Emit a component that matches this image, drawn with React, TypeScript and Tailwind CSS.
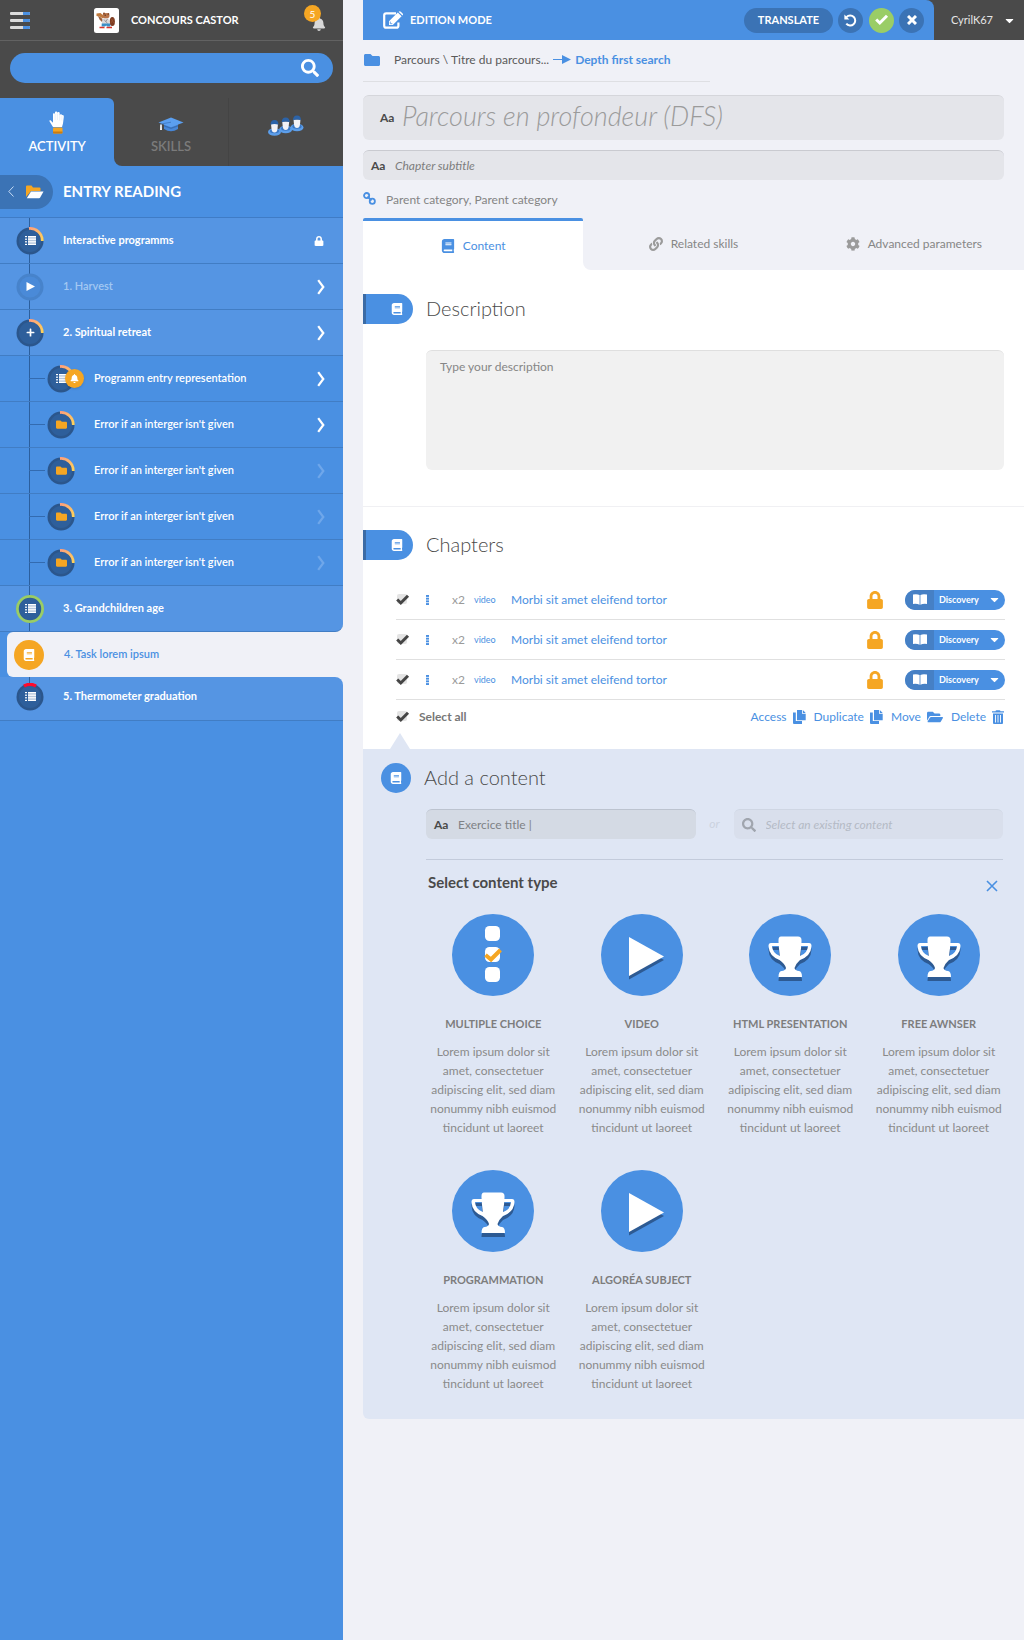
import React from "react";
import {
  FaBell,
  FaBook,
  FaCaretDown,
  FaCog,
  FaFolder,
  FaFolderOpen,
  FaLink,
  FaLock,
  FaPlus,
  FaSearch,
} from "react-icons/fa";

type Glyph = "list" | "play" | "plus" | "folder" | "book";
type Ring = "progress" | "faded" | "done" | "alert";

interface NavRow {
  label: string;
  glyph: Glyph;
  ring: Ring;
  sub?: boolean;
  muted?: boolean;
  end?: "lock" | "chevron" | "dim";
  badge?: boolean;
}

const navRows: NavRow[] = [
  { label: "Interactive programms", glyph: "list", ring: "progress", end: "lock" },
  { label: "1. Harvest", glyph: "play", ring: "faded", muted: true, end: "chevron" },
  { label: "2. Spiritual retreat", glyph: "plus", ring: "progress", end: "chevron" },
  { label: "Programm entry representation", glyph: "list", ring: "progress", sub: true, end: "chevron", badge: true },
  { label: "Error if an interger isn't given", glyph: "folder", ring: "progress", sub: true, end: "chevron" },
  { label: "Error if an interger isn't given", glyph: "folder", ring: "progress", sub: true, end: "dim" },
  { label: "Error if an interger isn't given", glyph: "folder", ring: "progress", sub: true, end: "dim" },
  { label: "Error if an interger isn't given", glyph: "folder", ring: "progress", sub: true, end: "dim" },
];

function ListGlyph() {
  return (
    <svg width="11" height="9" viewBox="0 0 11 9" aria-hidden="true">
      <rect x="3" y="0" width="8" height="9" fill="#ffffff" opacity="0.65" />
      {[0, 2.6, 5.2, 7.8].map((y) => (
        <g key={y} fill="#ffffff">
          <rect x="0" y={y} width="2" height="1.2" />
          <rect x="3" y={y} width="8" height="1.2" />
        </g>
      ))}
    </svg>
  );
}

function NavGlyph({ glyph }: { glyph: Glyph }) {
  if (glyph === "list") return <ListGlyph />;
  if (glyph === "play")
    return (
      <svg width="9" height="9" viewBox="0 0 9 9" aria-hidden="true" className="ml-px">
        <path d="M0.5 0L9 4.5L0.5 9Z" fill="#ffffff" />
      </svg>
    );
  if (glyph === "plus") return <FaPlus size={9} />;
  if (glyph === "folder") return <FaFolder size={11} className="text-[#f5a623]" />;
  return <FaBook size={12} />;
}

function NavBadge({ glyph, ring, badge }: { glyph: Glyph; ring: Ring; badge?: boolean }) {
  return (
    <span className="relative z-10 flex size-7 shrink-0 items-center justify-center">
      <svg viewBox="0 0 28 28" className="absolute inset-0 size-7" aria-hidden="true">
        <defs>
          <linearGradient id="arc" x1="0" y1="0" x2="1" y2="1">
            <stop offset="0" stopColor="#ffa07c" />
            <stop offset="1" stopColor="#fdd35a" />
          </linearGradient>
        </defs>
        {ring === "faded" ? (
          <g>
            <circle cx="14" cy="14" r="13.5" fill="#4783cb" />
            <circle cx="14" cy="14" r="10.5" fill="#4a8ad8" />
          </g>
        ) : (
          <g>
            <circle cx="14" cy="14" r="13.5" fill="#2b568c" />
            <circle cx="14" cy="14" r="11" fill="#2e5f9b" />
          </g>
        )}
        {ring === "progress" && (
          <path d="M13 1.5A12.3 12.3 0 0 1 26.3 14" fill="none" stroke="url(#arc)" strokeWidth="2.8" />
        )}
        {ring === "done" && <circle cx="14" cy="14" r="12.6" fill="none" stroke="#9acd66" strokeWidth="2.8" />}
        {ring === "alert" && <path d="M8 3Q14 -0.4 20 3" fill="none" stroke="#ff0a2b" strokeWidth="3.2" />}
      </svg>
      <span className="relative flex text-white">
        <NavGlyph glyph={glyph} />
      </span>
      {badge && (
        <span className="absolute top-1 left-4.5 flex size-[19px] items-center justify-center rounded-full bg-[#f5a623] text-white shadow-sm">
          <FaBell size={9} />
        </span>
      )}
    </span>
  );
}

function Chevron({ dim }: { dim?: boolean }) {
  return (
    <svg width="8" height="16" viewBox="0 0 8 16" aria-hidden="true" className={dim ? "text-[#6fa7ea]" : "text-white"}>
      <path d="M1.2 1.2L6.3 8L1.2 14.8" fill="none" stroke="currentColor" strokeWidth="2.2" />
    </svg>
  );
}

function Row({ row }: { row: NavRow }) {
  return (
    <li className={row.sub ? "bg-[#4a90e2]" : "bg-[#5595e3]"}>
      <a href="#" className="relative flex h-[46px] items-center border-b border-[#417dc4] pr-[18px]">
        <span className="absolute inset-y-0 left-[29px] w-px bg-[#2b5f9e]" />
        {row.sub && <span className="absolute left-[29px] h-px w-4 bg-[#336bb0]" />}
        <span className={row.sub ? "ml-[47px] flex w-[47px]" : "ml-4 flex w-[47px]"}>
          <NavBadge glyph={row.glyph} ring={row.ring} badge={row.badge} />
        </span>
        <span
          className={
            row.sub
              ? "flex-1 text-[11px] font-semibold text-white"
              : row.muted
                ? "flex-1 text-[11px] font-semibold text-[#a3c8f2]"
                : "flex-1 text-[11px] font-bold text-white"
          }
        >
          {row.label}
        </span>
        {row.end === "lock" && <FaLock size={10} className="mr-px text-white" />}
        {row.end === "chevron" && <Chevron />}
        {row.end === "dim" && <Chevron dim />}
      </a>
    </li>
  );
}

function Beaver() {
  return (
    <svg width="25" height="25" viewBox="0 0 25 25" role="img" aria-label="Castor">
      <rect width="25" height="25" rx="2.5" fill="#ffffff" />
      <ellipse cx="18.3" cy="13.5" rx="2.6" ry="4.6" fill="#7d3c22" />
      <path d="M17 11l3 4M19.6 10.5l-3 5" stroke="#a45a35" strokeWidth="0.6" />
      <path d="M2.500 5.500l4-.5 4 3.500-1.500 2-3-1.800-3.500-.7z" fill="#c07a3c" />
      <path d="M4 8l3 1.500 2.500 3-1.500 1.500-2.500-2.500z" fill="#9a5e3c" />
      <ellipse cx="12" cy="7.8" rx="3.5" ry="2.8" fill="#b9744a" />
      <circle cx="10" cy="5.600" r="1" fill="#8a4a28" />
      <circle cx="14.300" cy="5.900" r="1" fill="#8a4a28" />
      <circle cx="11.200" cy="7.200" r="0.600" fill="#3a2418" />
      <path d="M8.500 10.500h6l1.500 6H7.700z" fill="#dcd9da" />
      <path d="M10 11.500l3.500 4M13.500 11l-2 3" stroke="#8d8a90" strokeWidth="0.800" />
      <path d="M7.800 15.500h8.300l.3 3h-3.200l-1-1-1.200 1H7.600z" fill="#3a8fc7" />
      <path d="M5.500 18.800h5v1.500h-5zM12.500 18.800h5.500v1.500h-5.500z" fill="#d8342b" />
    </svg>
  );
}

function Hand() {
  return (
    <svg width="16" height="23" viewBox="0 0 16 23" aria-hidden="true">
      <path
        d="M4 16L.6 10.600C0 9.600 1.200 8.900 2 9.700L4 11.800V3.200C4 1.900 5.900 1.900 6 3.200V1.400C6.100 .1 8.100 .1 8.300 1.400V2C8.500 .7 10.700 .8 10.700 2.200V4C11 2.900 13 3 13 4.300C14.300 3.500 15 4.700 14.800 6L14 12.500L13 16Z"
        fill="#ffffff"
      />
      <path d="M6.100 3v6M8.400 2.500v6.500M10.700 3.500v6M12.900 4.500v5" stroke="#c9dcf3" strokeWidth="0.400" />
      <rect x="4" y="16.500" width="9.500" height="6" rx="1" fill="#f5a623" />
      <path d="M4 20.500h9.500v1a1 1 0 0 1-1 1H5a1 1 0 0 1-1-1z" fill="#c97b12" />
    </svg>
  );
}

function GradCap() {
  return (
    <svg width="26" height="15" viewBox="0 0 26 15" aria-hidden="true">
      <path d="M6 7V12Q13 16.500 20 12V7Z" fill="#4787d8" />
      <path d="M6 8L13 10.500L20 8V9.500L13 12L6 9.500Z" fill="#3a6fb5" />
      <path d="M13 .5L25.500 5.500L13 10.200L.5 5.500Z" fill="#5b9ff0" />
      <path d="M13 5.200L3 7V10" fill="none" stroke="#3a6fb5" strokeWidth="0.700" />
      <path d="M2.200 7.500H3.800L4 13H2Z" fill="#f0f0f0" />
    </svg>
  );
}

function Person({ x, y }: { x: number; y: number }) {
  return (
    <g transform={`translate(${x} ${y})`}>
      <ellipse cx="6.500" cy="12.500" rx="6.500" ry="3.800" fill="#5c9eea" />
      <ellipse cx="6.500" cy="11.500" rx="4.600" ry="2.200" fill="#3b78c4" />
      <path d="M3 4.500h7l-.6 5.500Q9 13 6.500 13Q4 13 3.600 10z" fill="#f3f2f6" />
      <path d="M2.500 5.200Q2.500 0.500 6.500 0.500Q10.500 .5 10.500 5.200Q6.500 3.800 2.500 5.200Z" fill="#2c63a8" />
    </g>
  );
}

function People() {
  return (
    <svg width="36" height="21" viewBox="0 0 36 21" role="img" aria-label="Groups">
      <Person x={22.5} y={0} />
      <Person x={11.2} y={2} />
      <Person x={0} y={4.500} />
    </svg>
  );
}

function Sidebar() {
  return (
    <aside className="flex w-[343px] shrink-0 flex-col bg-[#4a90e2]">
      <div className="bg-[#4a4a4a]">
        <header className="flex h-[41px] items-center border-b border-[#626262] px-2.5">
          <button aria-label="Menu" className="flex w-[84px]">
            <svg width="20" height="17" viewBox="0 0 20 17">
              {[0, 7, 14].map((y) => (
                <g key={y}>
                  <rect y={y} width="20" height="3" rx="1" fill="#dcdcdc" />
                  <path d={`M13 ${y}h6a1 1 0 0 1 1 1v1a1 1 0 0 1-1 1h-6z`} fill="#4a90e2" />
                </g>
              ))}
            </svg>
          </button>
          <Beaver />
          <h1 className="ml-3 flex-1 text-[11px] font-bold text-white">CONCOURS CASTOR</h1>
          <button aria-label="5 notifications" className="relative mt-2 mr-[7px] text-[#d8d8d8]">
            <FaBell size={14} />
            <span className="absolute -top-3 -left-2 flex size-[17px] items-center justify-center rounded-full bg-[#f5a623] text-[10px] leading-none text-white">
              5
            </span>
          </button>
        </header>
        <form className="px-2.5 pt-3 pb-[15px]">
          <div className="flex h-[30px] items-center rounded-full bg-[#4a90e2] pr-3.5 pl-4">
            <input aria-label="Search" className="min-w-0 flex-1 bg-transparent text-xs text-white outline-none" />
            <button type="button" aria-label="Search" className="text-white">
              <FaSearch size={18} />
            </button>
          </div>
        </form>
        <nav className="grid grid-cols-3">
          <button className="flex h-[68px] flex-col items-center justify-end rounded-tr-md bg-[#4a90e2] pb-2.5 text-[13px] leading-5 font-semibold text-white">
            <Hand />
            <span className="mt-0.5">ACTIVITY</span>
          </button>
          <div className="col-span-2 bg-[#4a90e2]">
            <div className="grid h-[68px] grid-cols-2 rounded-bl-lg bg-[#4a4a4a]">
              <button className="flex flex-col items-center justify-end border-r border-[#444444] pb-2.5 text-[13px] leading-5 font-semibold text-[#7b7b7b]">
                <GradCap />
                <span className="mt-1">SKILLS</span>
              </button>
              <button aria-label="Groups" className="flex items-start justify-center pt-[17px]">
                <People />
              </button>
            </div>
          </div>
        </nav>
      </div>
      <div className="flex h-[52px] items-center border-b border-[#3f7cc6]">
        <button
          aria-label="Back"
          className="flex h-[34px] w-[53px] items-center gap-3 rounded-r-full bg-[#3b73b5] pl-2 text-white"
        >
          <svg width="6" height="11" viewBox="0 0 6 11">
            <path d="M5.500 .5L.8 5.500L5.500 10.500" fill="none" stroke="#c5dbf5" />
          </svg>
          <svg width="18" height="14" viewBox="0 0 18 14">
            <path d="M0 12V1.500Q0 .5 1 .5H5.500L7 2.500H13.500Q14.500 2.500 14.500 3.500V6H5Z" fill="#f5a623" />
            <path d="M5 6.500H17.500L14.200 12.500Q13.800 13.200 13 13.200H.8Z" fill="#ffffff" />
          </svg>
        </button>
        <h2 className="ml-2.5 text-[15px] font-bold text-white">ENTRY READING</h2>
      </div>
      <ul className="bg-[#f0f1f7]">
        {navRows.map((row, i) => (
          <Row key={i} row={row} />
        ))}
        <li>
          <a
            href="#"
            className="relative flex h-[46px] items-center rounded-br-lg border-b border-[#417dc4] bg-[#5595e3] pl-4"
          >
            <span className="absolute inset-y-0 left-[29px] w-px bg-[#2b5f9e]" />
            <NavBadge glyph="list" ring="done" />
            <span className="ml-[19px] text-[11px] font-bold text-white">3. Grandchildren age</span>
          </a>
        </li>
        <li className="bg-linear-to-r from-[#4a90e2] from-50% to-[#f0f1f7] to-50% pl-[7px]">
          <a href="#" aria-current="page" className="flex h-[45px] items-center rounded-l-md bg-[#f0f1f7] pl-[7px]">
            <span className="flex size-[30px] items-center justify-center rounded-full bg-[#f5a623] text-white">
              <FaBook size={12} />
            </span>
            <span className="ml-5 text-[11px] font-semibold text-[#4a90e2]">4. Task lorem ipsum</span>
          </a>
        </li>
        <li>
          <a
            href="#"
            className="relative flex h-11 items-center rounded-tr-lg border-b border-[#417dc4] bg-[#5595e3] pb-1 pl-4"
          >
            <span className="absolute top-0 left-[29px] h-2 w-px bg-[#2b5f9e]" />
            <NavBadge glyph="list" ring="alert" />
            <span className="ml-[19px] text-[11px] font-bold text-white">5. Thermometer graduation</span>
          </a>
        </li>
      </ul>
    </aside>
  );
}

function CheckMark({ size }: { size: number }) {
  return (
    <svg width={size} height={size} viewBox="0 0 14 14" aria-hidden="true" className="pointer-events-none absolute inset-0">
      <path d="M1.200 6.500L4.800 10L12 2.700" fill="none" stroke="currentColor" strokeWidth="3" />
    </svg>
  );
}

function TickBox({ id, label }: { id: string; label?: string }) {
  return (
    <span className="relative flex size-3.5 shrink-0 text-[#454545]">
      <input
        id={id}
        type="checkbox"
        defaultChecked
        aria-label={label}
        className="m-px size-2.5 appearance-none rounded-xs bg-[#e4e4e4]"
      />
      <CheckMark size={14} />
    </span>
  );
}

function EditIcon() {
  return (
    <svg width="21" height="18" viewBox="0 0 21 18" aria-hidden="true">
      <path
        d="M13 2.300H3.200Q1.200 2.300 1.200 4.300V14.700Q1.200 16.700 3.200 16.700H13.400Q15.400 16.700 15.400 14.700V11.500"
        fill="none"
        stroke="#ffffff"
        strokeWidth="2.200"
      />
      <path d="M6 10.200L14.800 1.400L18.600 5.200L9.800 14H6Z" fill="#ffffff" />
      <path d="M15.600 .8Q16.600 -.3 17.800 .7L19.600 2.500Q20.500 3.500 19.500 4.500Z" fill="#ffffff" />
      <path d="M7.300 10.600V12.700H9.300" fill="none" stroke="#4a90e2" strokeWidth="0.800" />
      <path d="M15.200 1.200L19 5" stroke="#4a90e2" strokeWidth="0.700" />
    </svg>
  );
}

function TopBar() {
  return (
    <header className="flex h-10 bg-[#4a4a4a]">
      <div className="flex flex-1 items-center rounded-tr-lg bg-[#4a90e2] pr-2.5 pl-5 text-white">
        <EditIcon />
        <h2 className="ml-1.5 flex-1 text-[11px] font-bold">EDITION MODE</h2>
        <button className="h-[25px] w-[89px] rounded-full bg-[#3b73b5] text-[11px] font-bold">TRANSLATE</button>
        <button aria-label="Undo" className="ml-[5px] flex size-[25px] items-center justify-center rounded-full bg-[#3b73b5]">
          <svg width="13" height="13" viewBox="0 0 13 13">
            <path d="M2.500 3.200A5 5 0 1 1 2.300 9.600" fill="none" stroke="#ffffff" strokeWidth="2" />
            <path d="M.4 .6V5.500H5.300Z" fill="#ffffff" />
          </svg>
        </button>
        <button aria-label="Validate" className="ml-1.5 flex size-[25px] items-center justify-center rounded-full bg-[#9acd66]">
          <span className="relative size-3.5">
            <CheckMark size={14} />
          </span>
        </button>
        <button aria-label="Close" className="ml-[5px] flex size-[25px] items-center justify-center rounded-full bg-[#3b73b5]">
          <svg width="10" height="10" viewBox="0 0 10 10">
            <path d="M1 1L9 9M9 1L1 9" stroke="#ffffff" strokeWidth="3" />
          </svg>
        </button>
      </div>
      <button className="flex w-[90px] items-center justify-end gap-2.5 pr-2 text-[11px] text-[#e6e6e6]">
        CyrilK67
        <FaCaretDown size={13} className="text-white" />
      </button>
    </header>
  );
}

function SectionTitle({ title }: { title: string }) {
  return (
    <div className="flex h-[30px] items-center">
      <span className="flex h-[30px] w-[50px] items-center justify-end rounded-r-full border-l-3 border-[#3b6ba5] bg-[#4a90e2] pr-2.5 text-white">
        <FaBook size={12} />
      </span>
      <h3 className="mb-0.5 ml-[13px] text-xl font-light text-[#4a4a4a]">{title}</h3>
    </div>
  );
}

function BookOpen() {
  return (
    <svg width="14" height="11" viewBox="0 0 14 11" aria-hidden="true">
      <path d="M0 .5Q4 -.4 6.600 1V10.800Q4 9.500 0 10Z" fill="#ffffff" />
      <path d="M14 .5Q10 -.4 7.400 1V10.800Q10 9.500 14 10Z" fill="#ffffff" />
    </svg>
  );
}

function ChapterRow({ index }: { index: number }) {
  return (
    <li className="flex h-10 items-center border-b border-[#e0e0e0]">
      <TickBox id={`chapter-${index}`} label="Morbi sit amet eleifend tortor" />
      <button aria-label="Reorder" className="ml-4 flex w-2.5">
        <svg width="3" height="10" viewBox="0 0 3 10">
          {[0, 2.7, 5.4, 8.1].map((y) => (
            <rect key={y} y={y} width="3" height="1.900" fill="#4a90e2" />
          ))}
        </svg>
      </button>
      <span className="ml-4 w-[22px] text-xs text-[#9b9b9b]">x2</span>
      <span className="w-[37px] text-[9px] text-[#4a90e2]">video</span>
      <a href="#" className="flex-1 text-xs text-[#4a90e2]">
        Morbi sit amet eleifend tortor
      </a>
      <FaLock size={18} className="mr-[21px] text-[#f5a623]" />
      <div className="relative flex h-5 w-[100px] items-center rounded-full bg-[#4a90e2]">
        <span className="flex h-5 w-[29px] items-center justify-center rounded-l-full bg-[#4680c5]">
          <BookOpen />
        </span>
        <select
          aria-label="Access level"
          defaultValue="Discovery"
          className="h-5 flex-1 appearance-none bg-transparent pl-[5px] text-[9px] font-bold text-white outline-none"
        >
          <option>Discovery</option>
        </select>
        <FaCaretDown size={13} className="pointer-events-none absolute right-1 text-white" />
      </div>
    </li>
  );
}

function PagesIcon() {
  return (
    <svg width="13" height="14" viewBox="0 0 13 14" aria-hidden="true">
      <path d="M0 2.500H2.800V11H9V14H1Q0 14 0 13Z" fill="#4a90e2" />
      <path d="M4 0H9V3.700H12.700V10.200H4Z" fill="#4a90e2" />
      <path d="M9.800 0L12.700 3H9.800Z" fill="#4a90e2" />
    </svg>
  );
}

function BinIcon() {
  return (
    <svg width="12" height="14" viewBox="0 0 12 14" aria-hidden="true">
      <path d="M3.500 1.200Q3.600 .2 4.500 .2H7.500Q8.400 .2 8.500 1.200H12V2.500H0V1.200Z" fill="#4a90e2" />
      <path d="M1 3.500H11V13Q11 14 10 14H2Q1 14 1 13Z" fill="#4a90e2" />
      <path d="M3.500 5V12.500M6 5V12.500M8.500 5V12.500" stroke="#ffffff" strokeWidth="0.900" />
    </svg>
  );
}

function ChainIcon() {
  return (
    <svg width="13" height="13" viewBox="0 0 13 13" aria-hidden="true" className="mb-1">
      <g fill="none" stroke="#4a90e2" strokeWidth="1.800">
        <circle cx="3.600" cy="3.600" r="2.600" />
        <circle cx="9.300" cy="9.300" r="2.600" />
        <path d="M4.500 4.500L8.500 8.500" />
      </g>
    </svg>
  );
}

type TypeIcon = "choice" | "play" | "trophy";

const trophyPath =
  "M13 .5H30Q33.500 .5 33.500 4V7H41Q43.500 7 43.500 10Q43 20 32 24Q27.500 28 26.500 32Q27 34.500 31 35Q34 35.500 34 41H10.500Q10.500 35.500 13.500 35Q17.500 34.500 18 32Q17 28 11.500 24Q1 20 .5 10Q.5 7 3 7H10.500V4Q10.500 .5 13 .5ZM4 10Q4.500 17.500 11.800 20L10.700 10ZM40 10H33.300L32 20Q39.500 17.500 40 10Z";

function TypeGlyph({ icon }: { icon: TypeIcon }) {
  return (
    <svg viewBox="0 0 82 82" className="size-[82px] rounded-full bg-[#4a90e2]" aria-hidden="true">
      {icon === "choice" && (
        <g>
          <rect x="33" y="12" width="15" height="15" rx="4.500" fill="#ffffff" />
          <rect x="33" y="33" width="15" height="15" rx="4.500" fill="#ffffff" />
          <rect x="33" y="53" width="15" height="15" rx="4.500" fill="#ffffff" />
          <path d="M33.500 41L39 45.500L48.500 36" fill="none" stroke="#f5a623" strokeWidth="4" />
        </g>
      )}
      {icon === "play" && (
        <g>
          <path d="M28 27L63 46L28 65.500Z" fill="#2d5a93" />
          <path d="M28 23L63 42.500L28 62Z" fill="#ffffff" />
        </g>
      )}
      {icon === "trophy" && (
        <g fillRule="evenodd">
          <path d={trophyPath} transform="translate(19 26)" fill="#2d5a93" />
          <path d={trophyPath} transform="translate(19 22)" fill="#ffffff" />
        </g>
      )}
    </svg>
  );
}

const contentTypes: { title: string; icon: TypeIcon }[] = [
  { title: "MULTIPLE CHOICE", icon: "choice" },
  { title: "VIDEO", icon: "play" },
  { title: "HTML PRESENTATION", icon: "trophy" },
  { title: "FREE AWNSER", icon: "trophy" },
  { title: "PROGRAMMATION", icon: "trophy" },
  { title: "ALGORÉA SUBJECT", icon: "play" },
];

function AddContent() {
  return (
    <section className="relative rounded-bl-md bg-[#dfe6f4] pt-3.5 pb-[25px]">
      <svg width="20" height="16" viewBox="0 0 20 16" aria-hidden="true" className="absolute -top-4 left-[27px]">
        <path d="M0 16L10 0L20 16Z" fill="#dfe6f4" />
      </svg>
      <div className="flex items-center pl-[18px]">
        <span className="flex size-[30px] items-center justify-center rounded-full bg-[#4a90e2] text-white">
          <FaBook size={12} />
        </span>
        <h3 className="mb-0.5 ml-[13px] text-xl font-light text-[#4a4a4a]">Add a content</h3>
      </div>
      <div className="mt-4 mr-[21px] ml-[63px] flex items-center border-b border-[#c3cbdb] pb-5">
        <label className="flex h-[30px] flex-1 items-center rounded-md border-t border-[#bcc3cf] bg-[#d4dae4] px-2 text-xs">
          <span className="w-6 font-bold text-[#4a4a4a]">Aa</span>
          <input defaultValue="Exercice title |" className="min-w-0 flex-1 bg-transparent text-[#7f8286] outline-none" />
        </label>
        <span className="w-[38px] text-center text-xs text-[#cbd2df] italic">or</span>
        <label className="flex h-[30px] flex-1 items-center rounded-md border-t border-[#cfd6e3] bg-[#d9dfec] px-2 text-xs">
          <span className="flex w-6 text-[#a0a5ae]">
            <FaSearch size={14} />
          </span>
          <input
            aria-label="Select an existing content"
            placeholder="Select an existing content"
            className="min-w-0 flex-1 bg-transparent italic outline-none placeholder:text-[#b4bac5]"
          />
        </label>
      </div>
      <div className="mt-2.5 flex h-6 items-center justify-between pr-[26px] pl-[65px]">
        <h4 className="text-[15px] font-bold text-[#4a4a4a]">Select content type</h4>
        <button aria-label="Close" className="pt-2">
          <svg width="12" height="12" viewBox="0 0 12 12">
            <path d="M1 1L11 11M11 1L1 11" stroke="#4a90e2" strokeWidth="1.600" />
          </svg>
        </button>
      </div>
      <div className="mt-5 mr-[11px] ml-14 grid grid-cols-4 gap-y-8">
        {contentTypes.map((t) => (
          <button key={t.title} className="flex flex-col items-center">
            <TypeGlyph icon={t.icon} />
            <span className="mt-[18px] text-[11px] leading-5 font-bold text-[#7d7d7d]">{t.title}</span>
            <span className="mt-2 mb-px max-w-[130px] text-xs leading-[19px] text-[#8a8a8a]">
              Lorem ipsum dolor sit amet, consectetuer adipiscing elit, sed diam nonummy nibh euismod tincidunt ut laoreet
            </span>
          </button>
        ))}
      </div>
    </section>
  );
}

function Main() {
  return (
    <main className="min-w-0 flex-1 pl-5">
      <TopBar />
      <nav aria-label="Breadcrumb" className="mr-[314px] flex h-[42px] items-center border-b border-[#dedfe3] pb-0.5 text-xs whitespace-nowrap">
        <FaFolder size={16} className="ml-px text-[#4a90e2]" />
        <a href="#" className="ml-3.5 text-[#5a5a5a]">
          Parcours \ Titre du parcours...
        </a>
        <svg width="18" height="9" viewBox="0 0 18 9" aria-hidden="true" className="mx-1 shrink-0">
          <path d="M0 4H9V0L18 4.500L9 9V5H0Z" fill="#4a90e2" />
        </svg>
        <a href="#" className="font-bold text-[#4a90e2]">
          Depth first search
        </a>
      </nav>
      <div className="mt-[13px] mr-5">
        <label className="flex h-[45px] items-center rounded-md border-t border-[#d5d6db] bg-[#e4e5ea] pr-4 pl-[17px]">
          <span className="w-[22px] text-xs font-bold text-[#4a4a4a]">Aa</span>
          <input
            aria-label="Title"
            placeholder="Parcours en profondeur (DFS)"
            className="mb-1 min-w-0 flex-1 bg-transparent text-[27px] leading-9 font-light italic outline-none placeholder:text-[#9b9b9b]"
          />
        </label>
        <label className="mt-2.5 flex h-[30px] items-center rounded-md border-t border-[#c9cad0] bg-[#e4e5ea] px-2 text-xs">
          <span className="w-6 font-bold text-[#4a4a4a]">Aa</span>
          <input
            aria-label="Chapter subtitle"
            placeholder="Chapter subtitle"
            className="min-w-0 flex-1 bg-transparent italic outline-none placeholder:text-[#7d7d7d]"
          />
        </label>
        <p className="flex h-[38px] items-center gap-2.5 pt-0.5 text-xs text-[#848484]">
          <ChainIcon />
          Parent category, Parent category
        </p>
      </div>
      <div className="bg-white">
        <div className="flex h-[52px]">
          <div className="flex-1 bg-[#f0f1f7]">
            <button className="flex h-[52px] w-full items-center justify-center gap-2 rounded-t-xs border-t-3 border-[#4a90e2] bg-white text-xs text-[#4a90e2]">
              <FaBook size={14} />
              Content
            </button>
          </div>
          <div className="flex flex-2 rounded-bl-lg bg-[#f0f1f7] text-xs text-[#868686]">
            <button className="flex flex-1 items-center justify-center gap-2">
              <FaLink size={14} className="text-[#9b9b9b]" />
              Related skills
            </button>
            <button className="flex flex-1 items-center justify-center gap-2">
              <FaCog size={14} className="text-[#9b9b9b]" />
              Advanced parameters
            </button>
          </div>
        </div>
        <section className="border-b border-[#f0f0f3] pt-6 pb-9">
          <SectionTitle title="Description" />
          <div className="mt-[26px] mr-5 ml-[63px]">
            <textarea
              aria-label="Description"
              placeholder="Type your description"
              className="block h-[120px] w-full resize-none rounded-md border-t border-[#dfdfdf] bg-[#f1f1f1] px-3.5 py-2 text-xs outline-none placeholder:text-[#868686]"
            />
          </div>
        </section>
        <section className="pt-[23px]">
          <SectionTitle title="Chapters" />
          <ul className="mt-5 mr-[19px] ml-[33px]">
            <ChapterRow index={1} />
            <ChapterRow index={2} />
            <ChapterRow index={3} />
          </ul>
          <div className="mr-5 ml-[33px] flex h-[49px] items-start pt-[7px] text-xs leading-5 text-[#4a90e2]">
            <span className="flex flex-1 items-center">
              <TickBox id="select-all" />
              <label htmlFor="select-all" className="ml-[9px] font-bold text-[#777777]">
                Select all
              </label>
            </span>
            <button className="flex items-center gap-1.5">
              Access <PagesIcon />
            </button>
            <button className="ml-2 flex items-center gap-1.5">
              Duplicate <PagesIcon />
            </button>
            <button className="ml-2 flex items-center gap-1.5">
              Move <FaFolderOpen size={16} />
            </button>
            <button className="ml-2 flex items-center gap-1.5">
              Delete <BinIcon />
            </button>
          </div>
        </section>
      </div>
      <AddContent />
    </main>
  );
}

export default function App() {
  return (
    <div className="flex min-h-screen bg-[#f0f1f7] font-['Lato',sans-serif] text-[#4a4a4a]">
      <Sidebar />
      <Main />
    </div>
  );
}
